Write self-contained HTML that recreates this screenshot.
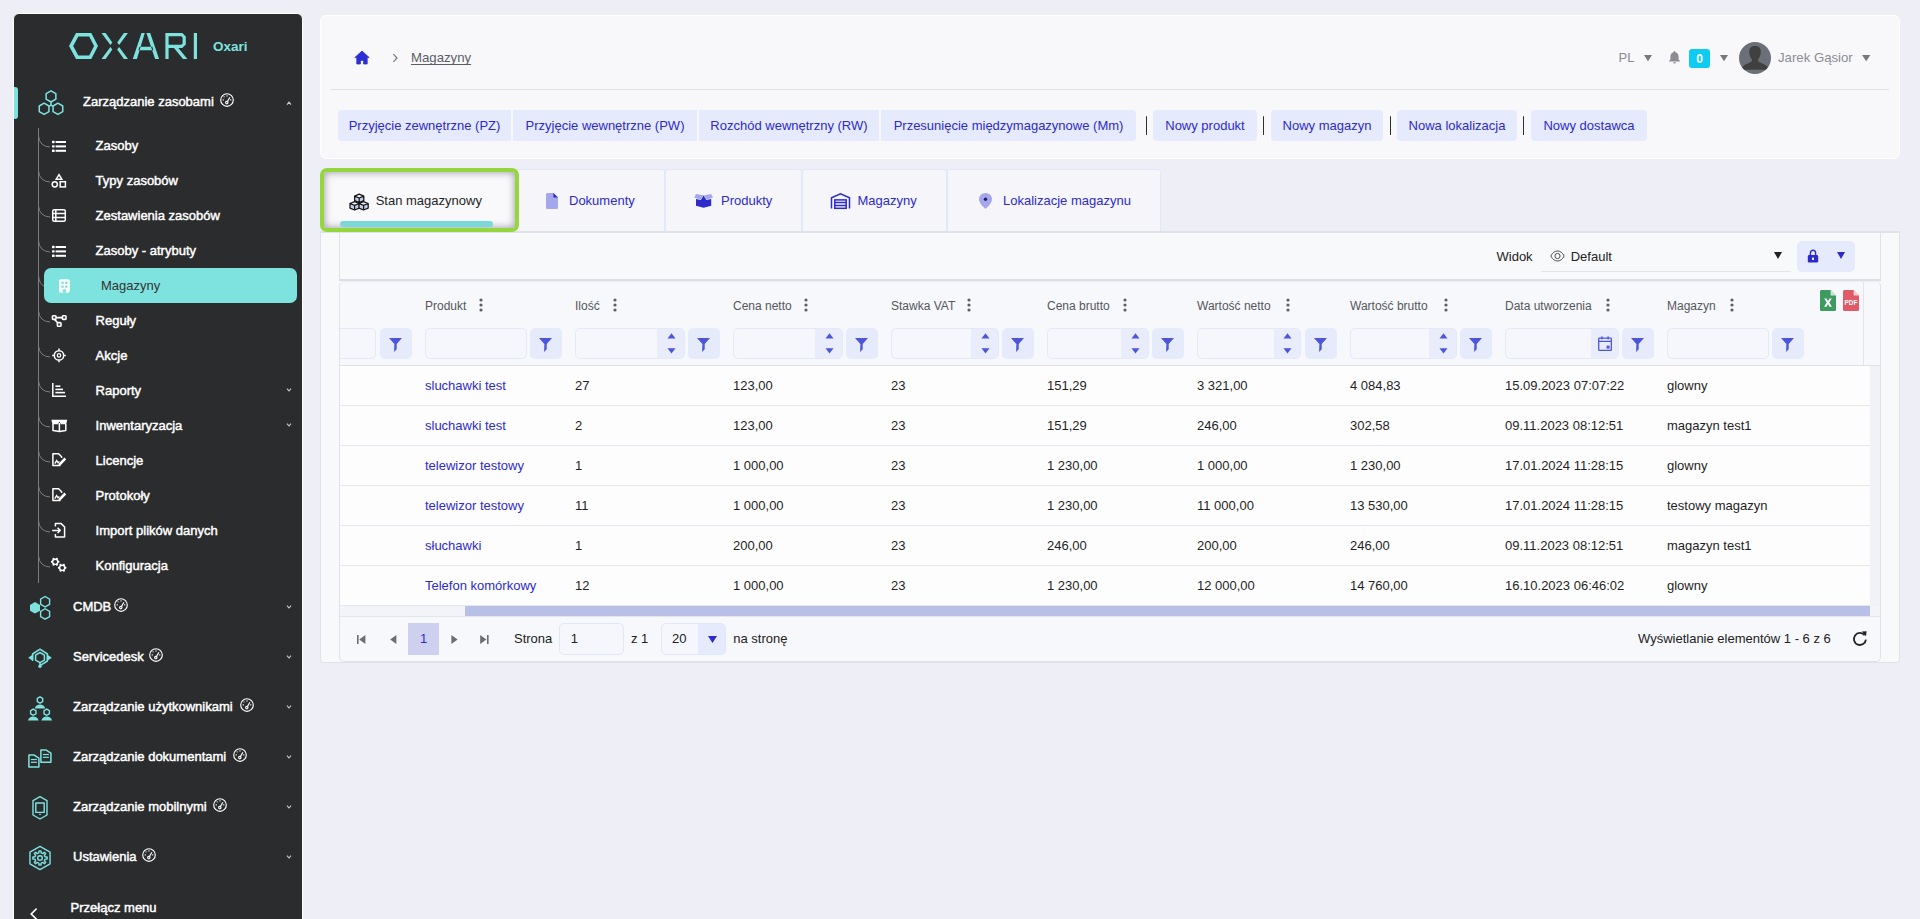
<!DOCTYPE html>
<html><head><meta charset="utf-8">
<style>
*{box-sizing:border-box;margin:0;padding:0}
html,body{width:1920px;height:919px;overflow:hidden}
body{background:#eeeef6;font-family:"Liberation Sans",sans-serif;position:relative;color:#222}
.a{position:absolute}
.t{position:absolute;white-space:nowrap}
svg{display:block;overflow:visible}
</style></head><body>

<div class="a" style="left:13px;top:13px;width:290px;height:940px;background:#2b2c2e;border:1px solid #fff;border-radius:6px"></div>
<svg class="a" style="left:0;top:0" width="260" height="70" viewBox="0 0 260 70"><g fill="#7ee3df" fill-rule="evenodd">
<path d="M76,33 L91.3,33 L98,46 L91.3,59 L76,59 L69,46 Z M78.3,36.4 L89.2,36.4 L94.1,46 L89.2,55.6 L78.3,55.6 L73.2,46 Z"/>
<path d="M101.5,33 L105.6,33 L112.3,42.4 L110.4,45 Z M101.5,59 L105.6,59 L112.3,49.6 L110.4,47 Z"/>
<path d="M128,33 L123.9,33 L117.2,42.4 L119.1,45 Z M128,59 L123.9,59 L117.2,49.6 L119.1,47 Z"/>
<path d="M132.8,59 L136.9,59 L144.8,33 L141.5,33 Z M159.1,59 L155.1,59 L146.4,33 L150.2,33 Z M139.5,46.7 L152.3,46.7 L153.4,50.2 L138.4,50.2 Z"/>
<path d="M165.4,33 L182.3,33 L185.8,36.6 L185.8,44.4 L182.2,48 L178.4,48 L187.4,59 L183,59 L174,48 L168.6,48 L168.6,59 L165.4,59 Z M168.6,36.2 L181.2,36.2 L182.6,37.6 L182.6,43.4 L181.2,44.8 L168.6,44.8 Z"/>
<rect x="193.8" y="33" width="3.2" height="26"/>
</g></svg>
<span class="t " style="left:213px;top:36.62px;font-size:13.5px;line-height:20px;height:20px;color:#7ee3df;font-weight:bold;">Oxari</span>
<div class="a" style="left:14px;top:87px;width:4px;height:32px;background:#7ee3df;border-radius:0 3px 3px 0"></div>
<svg class="a" style="left:0;top:0" width="80" height="130"><g fill="none" stroke="#7ee3df" stroke-width="1.5" stroke-linejoin="round"><path d="M51.00,102.00 L46.15,99.20 L46.15,93.60 L51.00,90.80 L55.85,93.60 L55.85,99.20 Z"/><path d="M44.10,114.40 L39.25,111.60 L39.25,106.00 L44.10,103.20 L48.95,106.00 L48.95,111.60 Z"/><path d="M57.90,114.40 L53.05,111.60 L53.05,106.00 L57.90,103.20 L62.75,106.00 L62.75,111.60 Z"/><path d="M51,102 L51,105.2 M51,105.2 L49,106.3 M51,105.2 L53,106.3"/></g></svg>
<span class="t " style="left:83px;top:91.69px;font-size:13px;line-height:20px;height:20px;color:#fff;-webkit-text-stroke:0.45px #fff;">Zarządzanie zasobami</span>
<svg class="a" style="left:220px;top:93px" width="14" height="14" viewBox="0 0 14 14"><g fill="none" stroke="#fff" stroke-width="1.15"><circle cx="7" cy="7" r="6.3"/><circle cx="6.8" cy="9.6" r="1.2"/><path d="M7.4,8.6 L9.9,4.2"/></g><g fill="#fff"><rect x="6.5" y="2.2" width="1" height="1.4"/><circle cx="4.1" cy="3.8" r=".6"/><rect x="2.6" y="6.4" width="1.4" height="1"/><rect x="10" y="6.4" width="1.4" height="1"/></g></svg>
<svg class="a" style="left:286px;top:100px" width="6" height="6" viewBox="0 0 6 6"><path d="M1,4.6 L3,2.2 L5,4.6" fill="none" stroke="#ccc" stroke-width="1.1"/></svg>
<div class="a" style="left:38px;top:128px;width:1px;height:455px;background:#7d7d7d"></div>
<span class="t " style="left:95.6px;top:135.99px;font-size:13px;line-height:20px;height:20px;color:#fff;-webkit-text-stroke:0.45px #fff;">Zasoby</span>
<svg class="a" style="left:0;top:0" width="80" height="600"><rect x="52" y="140.8" width="2.6" height="2.4" rx=".6" fill="#fff"/><rect x="55.6" y="141.0" width="10.4" height="2" fill="#fff"/><rect x="52" y="145.20000000000002" width="2.6" height="2.4" rx=".6" fill="#fff"/><rect x="55.6" y="145.4" width="10.4" height="2" fill="#fff"/><rect x="52" y="149.60000000000002" width="2.6" height="2.4" rx=".6" fill="#fff"/><rect x="55.6" y="149.8" width="10.4" height="2" fill="#fff"/></svg>
<svg class="a" style="left:0;top:0" width="60" height="600"><path d="M38.5,136 Q39.5,146.5 50,147" fill="none" stroke="#7d7d7d" stroke-width="1"/></svg>
<span class="t " style="left:95.6px;top:170.99px;font-size:13px;line-height:20px;height:20px;color:#fff;-webkit-text-stroke:0.45px #fff;">Typy zasobów</span>
<svg class="a" style="left:0;top:0" width="80" height="600"><g fill="none" stroke="#fff" stroke-width="1.5"><path d="M59,174.6 L61.8,179.2 L56.2,179.2 Z"/><circle cx="54.8" cy="184.3" r="2.6"/><rect x="60.2" y="181.7" width="5.2" height="5.2"/></g></svg>
<svg class="a" style="left:0;top:0" width="60" height="600"><path d="M38.5,171 Q39.5,181.5 50,182" fill="none" stroke="#7d7d7d" stroke-width="1"/></svg>
<span class="t " style="left:95.6px;top:205.99px;font-size:13px;line-height:20px;height:20px;color:#fff;-webkit-text-stroke:0.45px #fff;">Zestawienia zasobów</span>
<svg class="a" style="left:0;top:0" width="80" height="600"><g fill="none" stroke="#fff" stroke-width="1.5"><rect x="52.7" y="209.7" width="12.6" height="11.6" rx="1.5"/><path d="M52.7,213.6 H65.3 M52.7,217.4 H65.3 M55.8,209.7 V221.3"/></g></svg>
<svg class="a" style="left:0;top:0" width="60" height="600"><path d="M38.5,206 Q39.5,216.5 50,217" fill="none" stroke="#7d7d7d" stroke-width="1"/></svg>
<span class="t " style="left:95.6px;top:240.99px;font-size:13px;line-height:20px;height:20px;color:#fff;-webkit-text-stroke:0.45px #fff;">Zasoby - atrybuty</span>
<svg class="a" style="left:0;top:0" width="80" height="600"><rect x="52" y="245.8" width="2.6" height="2.4" rx=".6" fill="#fff"/><rect x="55.6" y="246.0" width="10.4" height="2" fill="#fff"/><rect x="52" y="250.20000000000002" width="2.6" height="2.4" rx=".6" fill="#fff"/><rect x="55.6" y="250.4" width="10.4" height="2" fill="#fff"/><rect x="52" y="254.60000000000002" width="2.6" height="2.4" rx=".6" fill="#fff"/><rect x="55.6" y="254.8" width="10.4" height="2" fill="#fff"/></svg>
<svg class="a" style="left:0;top:0" width="60" height="600"><path d="M38.5,241 Q39.5,251.5 50,252" fill="none" stroke="#7d7d7d" stroke-width="1"/></svg>
<div class="a" style="left:44px;top:268px;width:253px;height:35px;background:#7ee3df;border-radius:7px"></div>
<svg class="a" style="left:0;top:0" width="80" height="300"><rect x="59" y="279.2" width="10.8" height="13.6" rx="2" fill="#fff"/><g fill="#7ee3df"><rect x="61.3" y="281.6" width="2.4" height="2.4"/><rect x="65.1" y="281.6" width="2.4" height="2.4"/><rect x="61.3" y="285.4" width="2.4" height="2.4"/><rect x="65.1" y="285.4" width="2.4" height="2.4"/><rect x="62.6" y="289.2" width="3.6" height="3.6" rx="1"/></g></svg>
<span class="t " style="left:101px;top:276.49px;font-size:13px;line-height:20px;height:20px;color:#333;">Magazyny</span>
<svg class="a" style="left:0;top:0" width="60" height="600"><path d="M38.5,276 Q39.5,284 44,286" fill="none" stroke="#7d7d7d" stroke-width="1"/></svg>
<span class="t " style="left:95.6px;top:310.99px;font-size:13px;line-height:20px;height:20px;color:#fff;-webkit-text-stroke:0.45px #fff;">Reguły</span>
<svg class="a" style="left:0;top:0" width="80" height="600"><g fill="none" stroke="#fff" stroke-width="1.6"><rect x="52.4" y="315.8" width="3.6" height="3.6" rx=".8"/><rect x="62.4" y="315.8" width="3.6" height="3.6" rx=".8"/><rect x="57.4" y="322.6" width="3.6" height="3.6" rx=".8"/><path d="M56,317.6 H62.4 M54.6,319.4 L57.6,322.8"/></g></svg>
<svg class="a" style="left:0;top:0" width="60" height="600"><path d="M38.5,311 Q39.5,321.5 50,322" fill="none" stroke="#7d7d7d" stroke-width="1"/></svg>
<span class="t " style="left:95.6px;top:345.99px;font-size:13px;line-height:20px;height:20px;color:#fff;-webkit-text-stroke:0.45px #fff;">Akcje</span>
<svg class="a" style="left:0;top:0" width="80" height="600"><g fill="none" stroke="#fff" stroke-width="1.5"><circle cx="59" cy="355.4" r="4.7"/><circle cx="59" cy="355.4" r="1.7" stroke-width="1.3"/><path d="M59,348.6 V350.6 M59,360.2 V362.2 M52.2,355.4 H54.2 M63.8,355.4 H65.8"/></g></svg>
<svg class="a" style="left:0;top:0" width="60" height="600"><path d="M38.5,346 Q39.5,356.5 50,357" fill="none" stroke="#7d7d7d" stroke-width="1"/></svg>
<span class="t " style="left:95.6px;top:380.99px;font-size:13px;line-height:20px;height:20px;color:#fff;-webkit-text-stroke:0.45px #fff;">Raporty</span>
<svg class="a" style="left:0;top:0" width="80" height="600"><g fill="none" stroke="#fff" stroke-width="1.5"><path d="M52.8,383 V396.2 H66"/></g><g fill="#fff"><rect x="55.4" y="385.4" width="5" height="1.6"/><rect x="55.4" y="388.6" width="7.6" height="1.6"/><rect x="55.4" y="391.8" width="9.6" height="1.6"/></g></svg>
<svg class="a" style="left:0;top:0" width="60" height="600"><path d="M38.5,381 Q39.5,391.5 50,392" fill="none" stroke="#7d7d7d" stroke-width="1"/></svg>
<span class="t " style="left:95.6px;top:415.99px;font-size:13px;line-height:20px;height:20px;color:#fff;-webkit-text-stroke:0.45px #fff;">Inwentaryzacja</span>
<svg class="a" style="left:0;top:0" width="80" height="600"><path d="M51.4,419.8 L67.2,419.8 L66.2,424.2 L52.4,424.2 Z" fill="#fff"/><path d="M57.8,424.4 L59.4,421.6 L61,424.4 Z" fill="#2b2c2e"/><g fill="none" stroke="#fff" stroke-width="1.5" stroke-linejoin="round"><path d="M53,424 V430.4 L59.4,431.6 L65.8,430.4 V424 M59.4,423 V431.4"/></g></svg>
<svg class="a" style="left:0;top:0" width="60" height="600"><path d="M38.5,416 Q39.5,426.5 50,427" fill="none" stroke="#7d7d7d" stroke-width="1"/></svg>
<span class="t " style="left:95.6px;top:450.99px;font-size:13px;line-height:20px;height:20px;color:#fff;-webkit-text-stroke:0.45px #fff;">Licencje</span>
<svg class="a" style="left:0;top:0" width="80" height="600"><g fill="none" stroke="#fff" stroke-width="1.5" stroke-linejoin="round"><path d="M60.5,465.6 H52.9 V453.8 H58.6 L61.6,456.8 V458"/></g><g fill="none" stroke="#fff" stroke-width="1.3"><path d="M54.8,463.6 L56.6,460.6 L58,462.8 L59.4,461.6"/></g><path d="M58.8,463.4 L64.4,457.6 L66.2,459.4 L60.6,465.2 L58.4,465.6 Z" fill="#fff"/></svg>
<svg class="a" style="left:0;top:0" width="60" height="600"><path d="M38.5,451 Q39.5,461.5 50,462" fill="none" stroke="#7d7d7d" stroke-width="1"/></svg>
<span class="t " style="left:95.6px;top:485.99px;font-size:13px;line-height:20px;height:20px;color:#fff;-webkit-text-stroke:0.45px #fff;">Protokoły</span>
<svg class="a" style="left:0;top:0" width="80" height="600"><g fill="none" stroke="#fff" stroke-width="1.5" stroke-linejoin="round"><path d="M60.5,500.6 H52.9 V488.8 H58.6 L61.6,491.8 V493"/></g><g fill="none" stroke="#fff" stroke-width="1.3"><path d="M54.8,498.6 L56.6,495.6 L58,497.8 L59.4,496.6"/></g><path d="M58.8,498.4 L64.4,492.6 L66.2,494.4 L60.6,500.2 L58.4,500.6 Z" fill="#fff"/></svg>
<svg class="a" style="left:0;top:0" width="60" height="600"><path d="M38.5,486 Q39.5,496.5 50,497" fill="none" stroke="#7d7d7d" stroke-width="1"/></svg>
<span class="t " style="left:95.6px;top:520.99px;font-size:13px;line-height:20px;height:20px;color:#fff;-webkit-text-stroke:0.45px #fff;">Import plików danych</span>
<svg class="a" style="left:0;top:0" width="80" height="600"><g fill="none" stroke="#fff" stroke-width="1.5" stroke-linejoin="round"><path d="M55.4,526.6 V523.6 H61.2 L64.6,527 V537 H55.4 V534"/><path d="M52.2,530.4 H60.2 M57.6,527.8 L60.2,530.4 L57.6,533"/></g></svg>
<svg class="a" style="left:0;top:0" width="60" height="600"><path d="M38.5,521 Q39.5,531.5 50,532" fill="none" stroke="#7d7d7d" stroke-width="1"/></svg>
<span class="t " style="left:95.6px;top:555.99px;font-size:13px;line-height:20px;height:20px;color:#fff;-webkit-text-stroke:0.45px #fff;">Konfiguracja</span>
<svg class="a" style="left:0;top:0" width="80" height="600"><g fill="none" stroke="#fff" stroke-width="1.4"><circle cx="55.2" cy="561.8" r="2.6"/><circle cx="62.2" cy="567.8" r="2.6"/></g><g fill="#fff"><circle cx="58.50" cy="561.80" r="1.1"/><circle cx="56.85" cy="564.66" r="1.1"/><circle cx="53.55" cy="564.66" r="1.1"/><circle cx="51.90" cy="561.80" r="1.1"/><circle cx="53.55" cy="558.94" r="1.1"/><circle cx="56.85" cy="558.94" r="1.1"/><circle cx="65.50" cy="567.80" r="1.1"/><circle cx="63.85" cy="570.66" r="1.1"/><circle cx="60.55" cy="570.66" r="1.1"/><circle cx="58.90" cy="567.80" r="1.1"/><circle cx="60.55" cy="564.94" r="1.1"/><circle cx="63.85" cy="564.94" r="1.1"/></g></svg>
<svg class="a" style="left:0;top:0" width="60" height="600"><path d="M38.5,556 Q39.5,566.5 50,567" fill="none" stroke="#7d7d7d" stroke-width="1"/></svg>
<svg class="a" style="left:286px;top:387px" width="6" height="6" viewBox="0 0 6 6"><path d="M1,1.6 L3,4 L5,1.6" fill="none" stroke="#ccc" stroke-width="1.1"/></svg>
<svg class="a" style="left:286px;top:422px" width="6" height="6" viewBox="0 0 6 6"><path d="M1,1.6 L3,4 L5,1.6" fill="none" stroke="#ccc" stroke-width="1.1"/></svg>
<span class="t " style="left:73px;top:596.89px;font-size:13px;line-height:20px;height:20px;color:#fff;-webkit-text-stroke:0.45px #fff;">CMDB</span>
<svg class="a" style="left:114px;top:598px" width="14" height="14" viewBox="0 0 14 14"><g fill="none" stroke="#fff" stroke-width="1.15"><circle cx="7" cy="7" r="6.3"/><circle cx="6.8" cy="9.6" r="1.2"/><path d="M7.4,8.6 L9.9,4.2"/></g><g fill="#fff"><rect x="6.5" y="2.2" width="1" height="1.4"/><circle cx="4.1" cy="3.8" r=".6"/><rect x="2.6" y="6.4" width="1.4" height="1"/><rect x="10" y="6.4" width="1.4" height="1"/></g></svg>
<svg class="a" style="left:286px;top:604px" width="6" height="6" viewBox="0 0 6 6"><path d="M1,1.6 L3,4 L5,1.6" fill="none" stroke="#ccc" stroke-width="1.1"/></svg>
<svg class="a" style="left:0;top:0" width="60" height="900"><path d="M35.00,613.60 L29.98,610.70 L29.98,604.90 L35.00,602.00 L40.02,604.90 L40.02,610.70 Z" fill="#7ee3df"/><g fill="none" stroke="#7ee3df" stroke-width="1.4"><path d="M45.10,606.90 L40.60,604.30 L40.60,599.10 L45.10,596.50 L49.60,599.10 L49.60,604.30 Z"/><path d="M45.10,619.10 L40.60,616.50 L40.60,611.30 L45.10,608.70 L49.60,611.30 L49.60,616.50 Z"/></g></svg>
<span class="t " style="left:73px;top:646.89px;font-size:13px;line-height:20px;height:20px;color:#fff;-webkit-text-stroke:0.45px #fff;">Servicedesk</span>
<svg class="a" style="left:149.2px;top:648px" width="14" height="14" viewBox="0 0 14 14"><g fill="none" stroke="#fff" stroke-width="1.15"><circle cx="7" cy="7" r="6.3"/><circle cx="6.8" cy="9.6" r="1.2"/><path d="M7.4,8.6 L9.9,4.2"/></g><g fill="#fff"><rect x="6.5" y="2.2" width="1" height="1.4"/><circle cx="4.1" cy="3.8" r=".6"/><rect x="2.6" y="6.4" width="1.4" height="1"/><rect x="10" y="6.4" width="1.4" height="1"/></g></svg>
<svg class="a" style="left:286px;top:654px" width="6" height="6" viewBox="0 0 6 6"><path d="M1,1.6 L3,4 L5,1.6" fill="none" stroke="#ccc" stroke-width="1.1"/></svg>
<svg class="a" style="left:0;top:0" width="60" height="900"><g fill="none" stroke="#7ee3df" stroke-width="1.5" stroke-linejoin="round"><path d="M40.00,662.70 L35.58,660.15 L35.58,655.05 L40.00,652.50 L44.42,655.05 L44.42,660.15 Z"/><path d="M32.6,660.6 V654 L40,649.2 L47.4,654 V661 L40.8,665.2 M40,662.6 V665.4"/></g><g fill="#7ee3df"><path d="M33.2,654.2 L28.2,657.7 L33.2,661.2 Z"/><path d="M46.8,654.2 L51.8,657.7 L46.8,661.2 Z"/><circle cx="40" cy="666.2" r="1.7"/></g></svg>
<span class="t " style="left:73px;top:696.89px;font-size:13px;line-height:20px;height:20px;color:#fff;-webkit-text-stroke:0.45px #fff;">Zarządzanie użytkownikami</span>
<svg class="a" style="left:239.7px;top:698px" width="14" height="14" viewBox="0 0 14 14"><g fill="none" stroke="#fff" stroke-width="1.15"><circle cx="7" cy="7" r="6.3"/><circle cx="6.8" cy="9.6" r="1.2"/><path d="M7.4,8.6 L9.9,4.2"/></g><g fill="#fff"><rect x="6.5" y="2.2" width="1" height="1.4"/><circle cx="4.1" cy="3.8" r=".6"/><rect x="2.6" y="6.4" width="1.4" height="1"/><rect x="10" y="6.4" width="1.4" height="1"/></g></svg>
<svg class="a" style="left:286px;top:704px" width="6" height="6" viewBox="0 0 6 6"><path d="M1,1.6 L3,4 L5,1.6" fill="none" stroke="#ccc" stroke-width="1.1"/></svg>
<svg class="a" style="left:0;top:0" width="60" height="900"><g fill="none" stroke="#7ee3df" stroke-width="1.4"><path d="M40.00,703.10 L37.32,701.55 L37.32,698.45 L40.00,696.90 L42.68,698.45 L42.68,701.55 Z"/><path d="M33.30,715.30 L30.62,713.75 L30.62,710.65 L33.30,709.10 L35.98,710.65 L35.98,713.75 Z"/><path d="M46.70,715.30 L44.02,713.75 L44.02,710.65 L46.70,709.10 L49.38,710.65 L49.38,713.75 Z"/></g><g fill="#7ee3df"><path d="M34.8,708.4 C35.6,705.4 37.6,704.4 40,704.4 C42.4,704.4 44.4,705.4 45.2,708.4 Z"/><path d="M28,720.4 C28.8,717.4 30.9,716.4 33.3,716.4 C35.7,716.4 37.8,717.4 38.6,720.4 Z"/><path d="M41.4,720.4 C42.2,717.4 44.3,716.4 46.7,716.4 C49.1,716.4 51.2,717.4 52,720.4 Z"/></g></svg>
<span class="t " style="left:73px;top:746.89px;font-size:13px;line-height:20px;height:20px;color:#fff;-webkit-text-stroke:0.45px #fff;">Zarządzanie dokumentami</span>
<svg class="a" style="left:233.3px;top:748px" width="14" height="14" viewBox="0 0 14 14"><g fill="none" stroke="#fff" stroke-width="1.15"><circle cx="7" cy="7" r="6.3"/><circle cx="6.8" cy="9.6" r="1.2"/><path d="M7.4,8.6 L9.9,4.2"/></g><g fill="#fff"><rect x="6.5" y="2.2" width="1" height="1.4"/><circle cx="4.1" cy="3.8" r=".6"/><rect x="2.6" y="6.4" width="1.4" height="1"/><rect x="10" y="6.4" width="1.4" height="1"/></g></svg>
<svg class="a" style="left:286px;top:754px" width="6" height="6" viewBox="0 0 6 6"><path d="M1,1.6 L3,4 L5,1.6" fill="none" stroke="#ccc" stroke-width="1.1"/></svg>
<svg class="a" style="left:0;top:0" width="60" height="900"><g fill="none" stroke="#7ee3df" stroke-width="1.5" stroke-linejoin="round"><path d="M28.9,754.9 H33.8 L38.9,758.1 V767 H28.9 Z"/><path d="M40.9,749.9 H45.8 L50.9,753.1 V762.2 H40.9 Z"/></g><g fill="#7ee3df"><rect x="30.9" y="758.9" width="6" height="1.2"/><rect x="30.9" y="761.7" width="6" height="1.2"/><rect x="42.9" y="753.9" width="6" height="1.2"/><rect x="42.9" y="756.7" width="6" height="1.2"/></g></svg>
<span class="t " style="left:73px;top:796.89px;font-size:13px;line-height:20px;height:20px;color:#fff;-webkit-text-stroke:0.45px #fff;">Zarządzanie mobilnymi</span>
<svg class="a" style="left:213.4px;top:798px" width="14" height="14" viewBox="0 0 14 14"><g fill="none" stroke="#fff" stroke-width="1.15"><circle cx="7" cy="7" r="6.3"/><circle cx="6.8" cy="9.6" r="1.2"/><path d="M7.4,8.6 L9.9,4.2"/></g><g fill="#fff"><rect x="6.5" y="2.2" width="1" height="1.4"/><circle cx="4.1" cy="3.8" r=".6"/><rect x="2.6" y="6.4" width="1.4" height="1"/><rect x="10" y="6.4" width="1.4" height="1"/></g></svg>
<svg class="a" style="left:286px;top:804px" width="6" height="6" viewBox="0 0 6 6"><path d="M1,1.6 L3,4 L5,1.6" fill="none" stroke="#ccc" stroke-width="1.1"/></svg>
<svg class="a" style="left:0;top:0" width="60" height="900"><g fill="none" stroke="#7ee3df" stroke-width="1.4" stroke-linejoin="round"><path d="M40,796.6 L47,800.6 V815 L40,819 L33,815 V800.6 Z"/><rect x="35.8" y="803" width="8.4" height="9.4"/></g><rect x="39" y="813.8" width="2" height="1" fill="#7ee3df"/></svg>
<span class="t " style="left:73px;top:846.89px;font-size:13px;line-height:20px;height:20px;color:#fff;-webkit-text-stroke:0.45px #fff;">Ustawienia</span>
<svg class="a" style="left:142px;top:848px" width="14" height="14" viewBox="0 0 14 14"><g fill="none" stroke="#fff" stroke-width="1.15"><circle cx="7" cy="7" r="6.3"/><circle cx="6.8" cy="9.6" r="1.2"/><path d="M7.4,8.6 L9.9,4.2"/></g><g fill="#fff"><rect x="6.5" y="2.2" width="1" height="1.4"/><circle cx="4.1" cy="3.8" r=".6"/><rect x="2.6" y="6.4" width="1.4" height="1"/><rect x="10" y="6.4" width="1.4" height="1"/></g></svg>
<svg class="a" style="left:286px;top:854px" width="6" height="6" viewBox="0 0 6 6"><path d="M1,1.6 L3,4 L5,1.6" fill="none" stroke="#ccc" stroke-width="1.1"/></svg>
<svg class="a" style="left:0;top:0" width="60" height="900"><g fill="none" stroke="#7ee3df" stroke-width="1.4" stroke-linejoin="round"><path d="M40.00,869.60 L29.95,863.80 L29.95,852.20 L40.00,846.40 L50.05,852.20 L50.05,863.80 Z"/><path d="M45.08,856.89 L47.13,857.01 L47.13,858.99 L45.08,859.11 L44.38,860.80 L45.74,862.35 L44.35,863.74 L42.80,862.38 L41.11,863.08 L40.99,865.13 L39.01,865.13 L38.89,863.08 L37.20,862.38 L35.65,863.74 L34.26,862.35 L35.62,860.80 L34.92,859.11 L32.87,858.99 L32.87,857.01 L34.92,856.89 L35.62,855.20 L34.26,853.65 L35.65,852.26 L37.20,853.62 L38.89,852.92 L39.01,850.87 L40.99,850.87 L41.11,852.92 L42.80,853.62 L44.35,852.26 L45.74,853.65 L44.38,855.20 Z"/><circle cx="40" cy="858" r="2.3"/></g></svg>
<span class="t " style="left:70.6px;top:897.89px;font-size:13px;line-height:20px;height:20px;color:#fff;-webkit-text-stroke:0.45px #fff;">Przełącz menu</span>
<svg class="a" style="left:0;top:0" width="60" height="919"><path d="M36.6,908.6 L31.2,914 L36.6,919.4" fill="none" stroke="#fff" stroke-width="1.6"/></svg>
<div class="a" style="left:320px;top:15px;width:1580px;height:144px;background:#f8f8fb;border:1px solid #fff;border-radius:6px"></div>
<svg class="a" style="left:354px;top:50px" width="16" height="15" viewBox="0 0 16 15"><path d="M8,1 L15.2,7.6 L13.2,7.6 L13.2,14 L9.6,14 L9.6,10.4 L6.4,10.4 L6.4,14 L2.8,14 L2.8,7.6 L0.8,7.6 Z" fill="#2d2fd6" stroke="#2d2fd6" stroke-width=".8" stroke-linejoin="round"/></svg>
<svg class="a" style="left:390px;top:52px" width="10" height="12" viewBox="0 0 10 12"><path d="M3.4,2.2 L7,6 L3.4,9.8" fill="none" stroke="#777" stroke-width="1.2"/></svg>
<span class="t " style="left:411px;top:48.42px;font-size:13.2px;line-height:20px;height:20px;color:#5b5e66;text-decoration:underline;text-underline-offset:2px;">Magazyny</span>
<div class="a" style="left:331px;top:89px;width:1558px;height:1px;background:#dfe2e8"></div>
<span class="t " style="left:1618.6px;top:48.49px;font-size:13px;line-height:20px;height:20px;color:#8a8c92;">PL</span>
<svg class="a" style="left:1644px;top:55px" width="8" height="6.2" viewBox="0 0 8 6.2"><path d="M0,0 L8,0 L4.0,6.2 Z" fill="#77797e"/></svg>
<svg class="a" style="left:1668px;top:50px" width="13" height="14" viewBox="0 0 13 14"><path d="M6.5,1 C6,1 5.6,1.4 5.6,1.9 L5.6,2.3 C3.6,2.8 2.4,4.5 2.4,6.6 L2.4,9.4 L1,11 L1,11.6 L12,11.6 L12,11 L10.6,9.4 L10.6,6.6 C10.6,4.5 9.4,2.8 7.4,2.3 L7.4,1.9 C7.4,1.4 7,1 6.5,1 Z M5.1,12.3 C5.1,13.1 5.7,13.6 6.5,13.6 C7.3,13.6 7.9,13.1 7.9,12.3 Z" fill="#8b8d92"/></svg>
<div class="a" style="left:1689px;top:49px;width:21px;height:19px;background:#0ecbf1;border-radius:3px;color:#fff;font-weight:bold;font-size:12px;line-height:20px;text-align:center">0</div>
<svg class="a" style="left:1720px;top:55px" width="8" height="6.2" viewBox="0 0 8 6.2"><path d="M0,0 L8,0 L4.0,6.2 Z" fill="#77797e"/></svg>
<svg class="a" style="left:1739px;top:42px" width="32" height="32" viewBox="0 0 32 32"><defs><clipPath id="av"><circle cx="16" cy="16" r="16"/></clipPath></defs><circle cx="16" cy="16" r="16" fill="#6b7078"/><g clip-path="url(#av)" fill="#404040"><path d="M10.2,9.6 C10.2,5.4 12.6,3.9 16,3.9 C19.4,3.9 21.8,5.4 21.8,9.6 C21.8,13 20.6,15.6 19.2,17.2 L19.2,19.6 L26.4,23 C28,23.8 29,25.4 29.4,27.7 L2.6,27.7 C3,25.4 4,23.8 5.6,23 L12.8,19.6 L12.8,17.2 C11.4,15.6 10.2,13 10.2,9.6 Z"/></g></svg>
<span class="t " style="left:1778px;top:47.92px;font-size:13.2px;line-height:20px;height:20px;color:#8a8c92;">Jarek Gąsior</span>
<svg class="a" style="left:1862px;top:55px" width="8.4" height="6.2" viewBox="0 0 8.4 6.2"><path d="M0,0 L8.4,0 L4.2,6.2 Z" fill="#77797e"/></svg>
<div class="a" style="left:338px;top:110px;width:173px;height:31px;background:#e6eafd;border-radius:4px 0 0 4px"></div>
<span class="t" style="left:338px;width:173px;text-align:center;top:115.5px;font-size:13px;line-height:20px;color:#2d2bcc">Przyjęcie zewnętrzne (PZ)</span>
<div class="a" style="left:513px;top:110px;width:184px;height:31px;background:#e6eafd;border-radius:0"></div>
<span class="t" style="left:513px;width:184px;text-align:center;top:115.5px;font-size:13px;line-height:20px;color:#2d2bcc">Przyjęcie wewnętrzne (PW)</span>
<div class="a" style="left:699px;top:110px;width:180px;height:31px;background:#e6eafd;border-radius:0"></div>
<span class="t" style="left:699px;width:180px;text-align:center;top:115.5px;font-size:13px;line-height:20px;color:#2d2bcc">Rozchód wewnętrzny (RW)</span>
<div class="a" style="left:881px;top:110px;width:255px;height:31px;background:#e6eafd;border-radius:0 4px 4px 0"></div>
<span class="t" style="left:881px;width:255px;text-align:center;top:115.5px;font-size:13px;line-height:20px;color:#2d2bcc">Przesunięcie międzymagazynowe (Mm)</span>
<div class="a" style="left:1153px;top:110px;width:104px;height:31px;background:#e6eafd;border-radius:4px"></div>
<span class="t" style="left:1153px;width:104px;text-align:center;top:115.5px;font-size:13px;line-height:20px;color:#2d2bcc">Nowy produkt</span>
<div class="a" style="left:1271px;top:110px;width:112px;height:31px;background:#e6eafd;border-radius:4px"></div>
<span class="t" style="left:1271px;width:112px;text-align:center;top:115.5px;font-size:13px;line-height:20px;color:#2d2bcc">Nowy magazyn</span>
<div class="a" style="left:1397px;top:110px;width:120px;height:31px;background:#e6eafd;border-radius:4px"></div>
<span class="t" style="left:1397px;width:120px;text-align:center;top:115.5px;font-size:13px;line-height:20px;color:#2d2bcc">Nowa lokalizacja</span>
<div class="a" style="left:1531px;top:110px;width:116px;height:31px;background:#e6eafd;border-radius:4px"></div>
<span class="t" style="left:1531px;width:116px;text-align:center;top:115.5px;font-size:13px;line-height:20px;color:#2d2bcc">Nowy dostawca</span>
<div class="a" style="left:1145.7px;top:116px;width:1.6px;height:19px;background:#2b2e33;border-radius:1px"></div>
<div class="a" style="left:1262.8px;top:116px;width:1.6px;height:19px;background:#2b2e33;border-radius:1px"></div>
<div class="a" style="left:1389.5px;top:116px;width:1.6px;height:19px;background:#2b2e33;border-radius:1px"></div>
<div class="a" style="left:1522.8px;top:116px;width:1.6px;height:19px;background:#2b2e33;border-radius:1px"></div>
<div class="a" style="left:505px;top:169px;width:160px;height:64px;background:#f5f5fa;border:1px solid #e2e8fb;border-bottom:none;border-radius:3px 3px 0 0"></div>
<div class="a" style="left:665px;top:169px;width:137px;height:64px;background:#f5f5fa;border:1px solid #e2e8fb;border-bottom:none;border-radius:3px 3px 0 0"></div>
<div class="a" style="left:802px;top:169px;width:145px;height:64px;background:#f5f5fa;border:1px solid #e2e8fb;border-bottom:none;border-radius:3px 3px 0 0"></div>
<div class="a" style="left:947px;top:169px;width:214px;height:64px;background:#f5f5fa;border:1px solid #e2e8fb;border-bottom:none;border-radius:3px 3px 0 0"></div>
<div class="a" style="left:320px;top:231px;width:1580px;height:432px;background:#f8f9fb;border:1px solid #dfe2e8;border-top:2px solid #dfe2e8;border-radius:0 0 4px 4px"></div>
<div class="a" style="left:320px;top:168px;width:199px;height:64px;border:4.6px solid #93d63e;border-radius:7px;background:#f9f9fc;box-shadow:inset 0 0 7px 1px rgba(50,50,70,.42)"></div>
<div class="a" style="left:340px;top:221px;width:153px;height:6px;background:#7ad9d6;border-radius:3px"></div>
<svg class="a" style="left:349px;top:193px" width="20" height="18" viewBox="0 0 20 18"><path d="M5.6,3.0999999999999996 V7.699999999999999 L10.2,9.6 L14.799999999999999,7.699999999999999 V3.0999999999999996 L10.2,5.0 Z" fill="#c6d0e4"/><path d="M10.2,1.2 L14.799999999999999,3.0999999999999996 L10.2,5.0 L5.6,3.0999999999999996 Z" fill="#f4f5fb"/><path d="M5.6,3.0999999999999996 V7.699999999999999 L10.2,9.6 L14.799999999999999,7.699999999999999 V3.0999999999999996 L10.2,5.0 Z M10.2,1.2 L14.799999999999999,3.0999999999999996 L10.2,5.0 L5.6,3.0999999999999996 Z M10.2,5.0 V9.6" fill="none" stroke="#141418" stroke-width="1.25" stroke-linejoin="round"/><path d="M1.0,10.5 V15.1 L5.6,17.0 L10.2,15.1 V10.5 L5.6,12.399999999999999 Z" fill="#c6d0e4"/><path d="M5.6,8.6 L10.2,10.5 L5.6,12.399999999999999 L1.0,10.5 Z" fill="#f4f5fb"/><path d="M1.0,10.5 V15.1 L5.6,17.0 L10.2,15.1 V10.5 L5.6,12.399999999999999 Z M5.6,8.6 L10.2,10.5 L5.6,12.399999999999999 L1.0,10.5 Z M5.6,12.399999999999999 V17.0" fill="none" stroke="#141418" stroke-width="1.25" stroke-linejoin="round"/><path d="M10.0,10.5 V15.1 L14.6,17.0 L19.2,15.1 V10.5 L14.6,12.399999999999999 Z" fill="#c6d0e4"/><path d="M14.6,8.6 L19.2,10.5 L14.6,12.399999999999999 L10.0,10.5 Z" fill="#f4f5fb"/><path d="M10.0,10.5 V15.1 L14.6,17.0 L19.2,15.1 V10.5 L14.6,12.399999999999999 Z M14.6,8.6 L19.2,10.5 L14.6,12.399999999999999 L10.0,10.5 Z M14.6,12.399999999999999 V17.0" fill="none" stroke="#141418" stroke-width="1.25" stroke-linejoin="round"/></svg>
<span class="t " style="left:375.7px;top:191.29px;font-size:13px;line-height:20px;height:20px;color:#1f1f24;">Stan magazynowy</span>
<svg class="a" style="left:546px;top:193px" width="12" height="16" viewBox="0 0 12 16"><path d="M1.6,0 H7.4 L12,4.6 V14.4 C12,15.3 11.3,16 10.4,16 H1.6 C0.7,16 0,15.3 0,14.4 V1.6 C0,0.7 0.7,0 1.6,0 Z" fill="#a5a7ec"/><path d="M7.4,0 L12,4.6 H7.4 Z" fill="#2d2bcc"/></svg>
<span class="t " style="left:569px;top:190.79px;font-size:13px;line-height:20px;height:20px;color:#2d2bcc;">Dokumenty</span>
<svg class="a" style="left:690px;top:188px" width="30" height="24" viewBox="0 0 30 24"><path d="M6,6.1 L13.1,7.3 L10.8,11.6 L4.2,9.8 Z M21.2,6.1 L14.1,7.3 L16.4,11.6 L23,9.8 Z" fill="#a5a7ec"/><path d="M6,10.9 L10.9,11.9 L13.6,7.3 L16.3,11.9 L21.2,10.9 L21.2,17.8 L13.6,19.8 L6,17.8 Z" fill="#2d2bcc"/></svg>
<span class="t " style="left:721px;top:190.79px;font-size:13px;line-height:20px;height:20px;color:#2d2bcc;">Produkty</span>
<svg class="a" style="left:830px;top:192px" width="21" height="17" viewBox="0 0 21 17"><g fill="none" stroke="#2d2bcc" stroke-width="1.5"><path d="M1.5,16.6 V5.8 L10.5,1.8 L19.5,5.8 V16.6"/><rect x="4.8" y="7.9" width="11.4" height="8.4"/><path d="M4.8,10.6 H16.2 M4.8,13.4 H16.2"/></g></svg>
<span class="t " style="left:857.4px;top:190.79px;font-size:13px;line-height:20px;height:20px;color:#2d2bcc;">Magazyny</span>
<svg class="a" style="left:979px;top:193px" width="13" height="16" viewBox="0 0 13 16"><path d="M6.5,0 C10.1,0 13,2.8 13,6.3 C13,9.8 9,14 6.5,16 C4,14 0,9.8 0,6.3 C0,2.8 2.9,0 6.5,0 Z" fill="#a5a7ec"/><circle cx="6.5" cy="6.3" r="1.7" fill="#1d1b6e"/></svg>
<span class="t " style="left:1003px;top:190.79px;font-size:13px;line-height:20px;height:20px;color:#2d2bcc;">Lokalizacje magazynu</span>
<div class="a" style="left:339px;top:233px;width:1542px;height:48px;border-left:1px solid #dfe2e8;border-right:1px solid #dfe2e8;border-bottom:2px solid #dcdfe6"></div>
<span class="t " style="left:1496.5px;top:246.89px;font-size:13px;line-height:20px;height:20px;color:#222;">Widok</span>
<svg class="a" style="left:1550px;top:250px" width="15" height="12" viewBox="0 0 15 12"><g fill="none" stroke="#444" stroke-width="0.95"><path d="M0.8,6 C2.6,2.6 4.8,1 7.5,1 C10.2,1 12.4,2.6 14.2,6 C12.4,9.4 10.2,11 7.5,11 C4.8,11 2.6,9.4 0.8,6 Z"/><circle cx="7.5" cy="6" r="2.6"/></g></svg>
<span class="t " style="left:1570.7px;top:246.89px;font-size:13px;line-height:20px;height:20px;color:#222;">Default</span>
<div class="a" style="left:1541px;top:271px;width:250px;height:1px;background:#e3e5ea"></div>
<svg class="a" style="left:1774px;top:252px" width="8" height="7" viewBox="0 0 8 7"><path d="M0,0 H8 L4,7 Z" fill="#222"/></svg>
<div class="a" style="left:1797px;top:241px;width:58px;height:31px;background:#e6eafd;border-radius:5px"></div>
<svg class="a" style="left:1807px;top:249px" width="12" height="14" viewBox="0 0 12 14"><path d="M3.4,6.4 V4 C3.4,2.4 4.5,1.2 6,1.2 C7.5,1.2 8.6,2.4 8.6,4 V6.4" fill="none" stroke="#2d2bcc" stroke-width="1.4"/><rect x="0.8" y="6" width="10.4" height="7.6" rx="1.4" fill="#2d2bcc"/><rect x="5.1" y="8.6" width="1.8" height="2.4" fill="#fff"/></svg>
<svg class="a" style="left:1837px;top:252px" width="8" height="7" viewBox="0 0 8 7"><path d="M0,0 H8 L4,7 Z" fill="#2d2bcc"/></svg>
<div class="a" style="left:339px;top:281px;width:1542px;height:381px;border:1px solid #dfe2e8;border-top-color:#eceef3;border-radius:5px;background:#f7f8fb;overflow:hidden"></div>
<div class="a" style="left:340px;top:365px;width:1540px;height:1px;background:#dfe2e8"></div>
<div class="a" style="left:1863px;top:282px;width:1px;height:83px;background:#e3e5ea"></div>
<div class="a" style="left:340px;top:282px;width:1540px;height:84px;overflow:hidden">
<div class="a" style="left:-10px;top:46px;width:46px;height:31px;border:1px solid #e3e9f9;border-radius:5px;background:#f6f7fc;overflow:hidden">
</div>
<div class="a" style="left:40px;top:46px;width:32px;height:31px;border-radius:5px;background:#e6ebfc"></div>
<svg class="a" style="left:49.0px;top:56px" width="13" height="14" viewBox="0 0 13 14"><path d="M0,0 H13 L7.7,6 V11.2 L5.1,14 L5.4,6 Z" fill="#4d55da"/></svg>
<span class="t" style="left:85px;top:13.84px;font-size:12px;line-height:20px;color:#54575d">Produkt</span>
<svg class="a" style="left:138.89999999999998px;top:16px" width="4" height="14" viewBox="0 0 4 14"><g fill="#5d5f65"><circle cx="2" cy="2" r="1.6"/><circle cx="2" cy="7" r="1.6"/><circle cx="2" cy="12" r="1.6"/></g></svg>
<div class="a" style="left:85px;top:46px;width:102px;height:31px;border:1px solid #e3e9f9;border-radius:5px;background:#f6f7fc;overflow:hidden">
</div>
<div class="a" style="left:190px;top:46px;width:32px;height:31px;border-radius:5px;background:#e6ebfc"></div>
<svg class="a" style="left:199.0px;top:56px" width="13" height="14" viewBox="0 0 13 14"><path d="M0,0 H13 L7.7,6 V11.2 L5.1,14 L5.4,6 Z" fill="#4d55da"/></svg>
<span class="t" style="left:235px;top:13.84px;font-size:12px;line-height:20px;color:#54575d">Ilość</span>
<svg class="a" style="left:272.79999999999995px;top:16px" width="4" height="14" viewBox="0 0 4 14"><g fill="#5d5f65"><circle cx="2" cy="2" r="1.6"/><circle cx="2" cy="7" r="1.6"/><circle cx="2" cy="12" r="1.6"/></g></svg>
<div class="a" style="left:235px;top:46px;width:110px;height:31px;border:1px solid #e3e9f9;border-radius:5px;background:#f6f7fc;overflow:hidden">
<div class="a" style="left:81px;top:0;width:28px;height:29px;background:#e8ecfb"></div>
<svg class="a" style="left:90.6px;top:3.4px" width="9" height="22" viewBox="0 0 9 22"><g fill="#4d55da"><path d="M4.5,1.2 L8.5,6.6 H0.5 Z"/><path d="M0.5,16.2 H8.5 L4.5,21.6 Z"/></g></svg>
</div>
<div class="a" style="left:348px;top:46px;width:32px;height:31px;border-radius:5px;background:#e6ebfc"></div>
<svg class="a" style="left:357.0px;top:56px" width="13" height="14" viewBox="0 0 13 14"><path d="M0,0 H13 L7.7,6 V11.2 L5.1,14 L5.4,6 Z" fill="#4d55da"/></svg>
<span class="t" style="left:393px;top:13.84px;font-size:12px;line-height:20px;color:#54575d">Cena netto</span>
<svg class="a" style="left:463.9px;top:16px" width="4" height="14" viewBox="0 0 4 14"><g fill="#5d5f65"><circle cx="2" cy="2" r="1.6"/><circle cx="2" cy="7" r="1.6"/><circle cx="2" cy="12" r="1.6"/></g></svg>
<div class="a" style="left:393px;top:46px;width:110px;height:31px;border:1px solid #e3e9f9;border-radius:5px;background:#f6f7fc;overflow:hidden">
<div class="a" style="left:81px;top:0;width:28px;height:29px;background:#e8ecfb"></div>
<svg class="a" style="left:90.6px;top:3.4px" width="9" height="22" viewBox="0 0 9 22"><g fill="#4d55da"><path d="M4.5,1.2 L8.5,6.6 H0.5 Z"/><path d="M0.5,16.2 H8.5 L4.5,21.6 Z"/></g></svg>
</div>
<div class="a" style="left:506px;top:46px;width:32px;height:31px;border-radius:5px;background:#e6ebfc"></div>
<svg class="a" style="left:515.0px;top:56px" width="13" height="14" viewBox="0 0 13 14"><path d="M0,0 H13 L7.7,6 V11.2 L5.1,14 L5.4,6 Z" fill="#4d55da"/></svg>
<span class="t" style="left:551px;top:13.84px;font-size:12px;line-height:20px;color:#54575d">Stawka VAT</span>
<svg class="a" style="left:627.0px;top:16px" width="4" height="14" viewBox="0 0 4 14"><g fill="#5d5f65"><circle cx="2" cy="2" r="1.6"/><circle cx="2" cy="7" r="1.6"/><circle cx="2" cy="12" r="1.6"/></g></svg>
<div class="a" style="left:551px;top:46px;width:108px;height:31px;border:1px solid #e3e9f9;border-radius:5px;background:#f6f7fc;overflow:hidden">
<div class="a" style="left:79px;top:0;width:28px;height:29px;background:#e8ecfb"></div>
<svg class="a" style="left:88.6px;top:3.4px" width="9" height="22" viewBox="0 0 9 22"><g fill="#4d55da"><path d="M4.5,1.2 L8.5,6.6 H0.5 Z"/><path d="M0.5,16.2 H8.5 L4.5,21.6 Z"/></g></svg>
</div>
<div class="a" style="left:662px;top:46px;width:32px;height:31px;border-radius:5px;background:#e6ebfc"></div>
<svg class="a" style="left:671.0px;top:56px" width="13" height="14" viewBox="0 0 13 14"><path d="M0,0 H13 L7.7,6 V11.2 L5.1,14 L5.4,6 Z" fill="#4d55da"/></svg>
<span class="t" style="left:707px;top:13.84px;font-size:12px;line-height:20px;color:#54575d">Cena brutto</span>
<svg class="a" style="left:782.6000000000001px;top:16px" width="4" height="14" viewBox="0 0 4 14"><g fill="#5d5f65"><circle cx="2" cy="2" r="1.6"/><circle cx="2" cy="7" r="1.6"/><circle cx="2" cy="12" r="1.6"/></g></svg>
<div class="a" style="left:707px;top:46px;width:102px;height:31px;border:1px solid #e3e9f9;border-radius:5px;background:#f6f7fc;overflow:hidden">
<div class="a" style="left:73px;top:0;width:28px;height:29px;background:#e8ecfb"></div>
<svg class="a" style="left:82.6px;top:3.4px" width="9" height="22" viewBox="0 0 9 22"><g fill="#4d55da"><path d="M4.5,1.2 L8.5,6.6 H0.5 Z"/><path d="M0.5,16.2 H8.5 L4.5,21.6 Z"/></g></svg>
</div>
<div class="a" style="left:812px;top:46px;width:32px;height:31px;border-radius:5px;background:#e6ebfc"></div>
<svg class="a" style="left:821.0px;top:56px" width="13" height="14" viewBox="0 0 13 14"><path d="M0,0 H13 L7.7,6 V11.2 L5.1,14 L5.4,6 Z" fill="#4d55da"/></svg>
<span class="t" style="left:857px;top:13.84px;font-size:12px;line-height:20px;color:#54575d">Wartość netto</span>
<svg class="a" style="left:946.2px;top:16px" width="4" height="14" viewBox="0 0 4 14"><g fill="#5d5f65"><circle cx="2" cy="2" r="1.6"/><circle cx="2" cy="7" r="1.6"/><circle cx="2" cy="12" r="1.6"/></g></svg>
<div class="a" style="left:857px;top:46px;width:104px;height:31px;border:1px solid #e3e9f9;border-radius:5px;background:#f6f7fc;overflow:hidden">
<div class="a" style="left:76px;top:0;width:27px;height:29px;background:#e8ecfb"></div>
<svg class="a" style="left:85.1px;top:3.4px" width="9" height="22" viewBox="0 0 9 22"><g fill="#4d55da"><path d="M4.5,1.2 L8.5,6.6 H0.5 Z"/><path d="M0.5,16.2 H8.5 L4.5,21.6 Z"/></g></svg>
</div>
<div class="a" style="left:965px;top:46px;width:32px;height:31px;border-radius:5px;background:#e6ebfc"></div>
<svg class="a" style="left:974.0px;top:56px" width="13" height="14" viewBox="0 0 13 14"><path d="M0,0 H13 L7.7,6 V11.2 L5.1,14 L5.4,6 Z" fill="#4d55da"/></svg>
<span class="t" style="left:1010px;top:13.84px;font-size:12px;line-height:20px;color:#54575d">Wartość brutto</span>
<svg class="a" style="left:1103.6000000000001px;top:16px" width="4" height="14" viewBox="0 0 4 14"><g fill="#5d5f65"><circle cx="2" cy="2" r="1.6"/><circle cx="2" cy="7" r="1.6"/><circle cx="2" cy="12" r="1.6"/></g></svg>
<div class="a" style="left:1010px;top:46px;width:107px;height:31px;border:1px solid #e3e9f9;border-radius:5px;background:#f6f7fc;overflow:hidden">
<div class="a" style="left:78px;top:0;width:28px;height:29px;background:#e8ecfb"></div>
<svg class="a" style="left:87.6px;top:3.4px" width="9" height="22" viewBox="0 0 9 22"><g fill="#4d55da"><path d="M4.5,1.2 L8.5,6.6 H0.5 Z"/><path d="M0.5,16.2 H8.5 L4.5,21.6 Z"/></g></svg>
</div>
<div class="a" style="left:1120px;top:46px;width:32px;height:31px;border-radius:5px;background:#e6ebfc"></div>
<svg class="a" style="left:1129.0px;top:56px" width="13" height="14" viewBox="0 0 13 14"><path d="M0,0 H13 L7.7,6 V11.2 L5.1,14 L5.4,6 Z" fill="#4d55da"/></svg>
<span class="t" style="left:1165px;top:13.84px;font-size:12px;line-height:20px;color:#54575d">Data utworzenia</span>
<svg class="a" style="left:1265.9px;top:16px" width="4" height="14" viewBox="0 0 4 14"><g fill="#5d5f65"><circle cx="2" cy="2" r="1.6"/><circle cx="2" cy="7" r="1.6"/><circle cx="2" cy="12" r="1.6"/></g></svg>
<div class="a" style="left:1165px;top:46px;width:114px;height:31px;border:1px solid #e3e9f9;border-radius:5px;background:#f6f7fc;overflow:hidden">
<div class="a" style="left:85px;top:0;width:28px;height:29px;background:#e8ecfb"></div>
<svg class="a" style="left:92px;top:7px" width="14" height="15" viewBox="0 0 14 15"><g fill="none" stroke="#4d55da" stroke-width="1.3"><rect x="0.7" y="2.2" width="12.6" height="12.1" rx="0.6"/><path d="M0.7,5.4 H13.3"/></g><g fill="#4d55da"><rect x="3.2" y="0.4" width="1.4" height="3"/><rect x="9.4" y="0.4" width="1.4" height="3"/><rect x="8.6" y="9.6" width="3" height="3"/></g></svg>
</div>
<div class="a" style="left:1282px;top:46px;width:32px;height:31px;border-radius:5px;background:#e6ebfc"></div>
<svg class="a" style="left:1291.0px;top:56px" width="13" height="14" viewBox="0 0 13 14"><path d="M0,0 H13 L7.7,6 V11.2 L5.1,14 L5.4,6 Z" fill="#4d55da"/></svg>
<span class="t" style="left:1327px;top:13.84px;font-size:12px;line-height:20px;color:#54575d">Magazyn</span>
<svg class="a" style="left:1389.9px;top:16px" width="4" height="14" viewBox="0 0 4 14"><g fill="#5d5f65"><circle cx="2" cy="2" r="1.6"/><circle cx="2" cy="7" r="1.6"/><circle cx="2" cy="12" r="1.6"/></g></svg>
<div class="a" style="left:1327px;top:46px;width:102px;height:31px;border:1px solid #e3e9f9;border-radius:5px;background:#f6f7fc;overflow:hidden">
</div>
<div class="a" style="left:1432px;top:46px;width:32px;height:31px;border-radius:5px;background:#e6ebfc"></div>
<svg class="a" style="left:1441.0px;top:56px" width="13" height="14" viewBox="0 0 13 14"><path d="M0,0 H13 L7.7,6 V11.2 L5.1,14 L5.4,6 Z" fill="#4d55da"/></svg>
</div>
<svg class="a" style="left:1820px;top:290px" width="16" height="21" viewBox="0 0 16 21"><path d="M1.6,0 H10.6 L16,5.4 V19.4 C16,20.3 15.3,21 14.4,21 H1.6 C0.7,21 0,20.3 0,19.4 V1.6 C0,0.7 0.7,0 1.6,0 Z" fill="#3d9b5f"/><path d="M10.6,0 L16,5.4 H10.6 Z" fill="#cfe8d6"/><path d="M4.2,8.6 H6.6 L8,11.2 L9.4,8.6 H11.8 L9.3,12.6 L11.9,16.8 H9.5 L8,14.1 L6.5,16.8 H4.1 L6.7,12.6 Z" fill="#fff"/></svg>
<svg class="a" style="left:1843px;top:290px" width="16" height="21" viewBox="0 0 16 21"><path d="M1.6,0 H10.6 L16,5.4 V19.4 C16,20.3 15.3,21 14.4,21 H1.6 C0.7,21 0,20.3 0,19.4 V1.6 C0,0.7 0.7,0 1.6,0 Z" fill="#e05a68"/><path d="M10.6,0 L16,5.4 H10.6 Z" fill="#f6d2d6"/><text x="8" y="14.6" font-family="Liberation Sans" font-weight="bold" font-size="6.4" fill="#fff" text-anchor="middle">PDF</text></svg>
<div class="a" style="left:340px;top:366px;width:1530px;height:240px;background:#fdfdfe"></div>
<div class="a" style="left:1870px;top:366px;width:10px;height:240px;background:#f1f2f8"></div>
<span class="t " style="left:425px;top:376.49px;font-size:13px;line-height:20px;height:20px;color:#2d2bcc;">sluchawki test</span>
<span class="t " style="left:575px;top:376.49px;font-size:13px;line-height:20px;height:20px;color:#1f1f24;">27</span>
<span class="t " style="left:733px;top:376.49px;font-size:13px;line-height:20px;height:20px;color:#1f1f24;">123,00</span>
<span class="t " style="left:891px;top:376.49px;font-size:13px;line-height:20px;height:20px;color:#1f1f24;">23</span>
<span class="t " style="left:1047px;top:376.49px;font-size:13px;line-height:20px;height:20px;color:#1f1f24;">151,29</span>
<span class="t " style="left:1197px;top:376.49px;font-size:13px;line-height:20px;height:20px;color:#1f1f24;">3 321,00</span>
<span class="t " style="left:1350px;top:376.49px;font-size:13px;line-height:20px;height:20px;color:#1f1f24;">4 084,83</span>
<span class="t " style="left:1505px;top:376.49px;font-size:13px;line-height:20px;height:20px;color:#1f1f24;">15.09.2023 07:07:22</span>
<span class="t " style="left:1667px;top:376.49px;font-size:13px;line-height:20px;height:20px;color:#1f1f24;">glowny</span>
<div class="a" style="left:340px;top:405px;width:1530px;height:1px;background:#e6e8ed"></div>
<span class="t " style="left:425px;top:416.49px;font-size:13px;line-height:20px;height:20px;color:#2d2bcc;">sluchawki test</span>
<span class="t " style="left:575px;top:416.49px;font-size:13px;line-height:20px;height:20px;color:#1f1f24;">2</span>
<span class="t " style="left:733px;top:416.49px;font-size:13px;line-height:20px;height:20px;color:#1f1f24;">123,00</span>
<span class="t " style="left:891px;top:416.49px;font-size:13px;line-height:20px;height:20px;color:#1f1f24;">23</span>
<span class="t " style="left:1047px;top:416.49px;font-size:13px;line-height:20px;height:20px;color:#1f1f24;">151,29</span>
<span class="t " style="left:1197px;top:416.49px;font-size:13px;line-height:20px;height:20px;color:#1f1f24;">246,00</span>
<span class="t " style="left:1350px;top:416.49px;font-size:13px;line-height:20px;height:20px;color:#1f1f24;">302,58</span>
<span class="t " style="left:1505px;top:416.49px;font-size:13px;line-height:20px;height:20px;color:#1f1f24;">09.11.2023 08:12:51</span>
<span class="t " style="left:1667px;top:416.49px;font-size:13px;line-height:20px;height:20px;color:#1f1f24;">magazyn test1</span>
<div class="a" style="left:340px;top:445px;width:1530px;height:1px;background:#e6e8ed"></div>
<span class="t " style="left:425px;top:456.49px;font-size:13px;line-height:20px;height:20px;color:#2d2bcc;">telewizor testowy</span>
<span class="t " style="left:575px;top:456.49px;font-size:13px;line-height:20px;height:20px;color:#1f1f24;">1</span>
<span class="t " style="left:733px;top:456.49px;font-size:13px;line-height:20px;height:20px;color:#1f1f24;">1 000,00</span>
<span class="t " style="left:891px;top:456.49px;font-size:13px;line-height:20px;height:20px;color:#1f1f24;">23</span>
<span class="t " style="left:1047px;top:456.49px;font-size:13px;line-height:20px;height:20px;color:#1f1f24;">1 230,00</span>
<span class="t " style="left:1197px;top:456.49px;font-size:13px;line-height:20px;height:20px;color:#1f1f24;">1 000,00</span>
<span class="t " style="left:1350px;top:456.49px;font-size:13px;line-height:20px;height:20px;color:#1f1f24;">1 230,00</span>
<span class="t " style="left:1505px;top:456.49px;font-size:13px;line-height:20px;height:20px;color:#1f1f24;">17.01.2024 11:28:15</span>
<span class="t " style="left:1667px;top:456.49px;font-size:13px;line-height:20px;height:20px;color:#1f1f24;">glowny</span>
<div class="a" style="left:340px;top:485px;width:1530px;height:1px;background:#e6e8ed"></div>
<span class="t " style="left:425px;top:496.49px;font-size:13px;line-height:20px;height:20px;color:#2d2bcc;">telewizor testowy</span>
<span class="t " style="left:575px;top:496.49px;font-size:13px;line-height:20px;height:20px;color:#1f1f24;">11</span>
<span class="t " style="left:733px;top:496.49px;font-size:13px;line-height:20px;height:20px;color:#1f1f24;">1 000,00</span>
<span class="t " style="left:891px;top:496.49px;font-size:13px;line-height:20px;height:20px;color:#1f1f24;">23</span>
<span class="t " style="left:1047px;top:496.49px;font-size:13px;line-height:20px;height:20px;color:#1f1f24;">1 230,00</span>
<span class="t " style="left:1197px;top:496.49px;font-size:13px;line-height:20px;height:20px;color:#1f1f24;">11 000,00</span>
<span class="t " style="left:1350px;top:496.49px;font-size:13px;line-height:20px;height:20px;color:#1f1f24;">13 530,00</span>
<span class="t " style="left:1505px;top:496.49px;font-size:13px;line-height:20px;height:20px;color:#1f1f24;">17.01.2024 11:28:15</span>
<span class="t " style="left:1667px;top:496.49px;font-size:13px;line-height:20px;height:20px;color:#1f1f24;">testowy magazyn</span>
<div class="a" style="left:340px;top:525px;width:1530px;height:1px;background:#e6e8ed"></div>
<span class="t " style="left:425px;top:536.49px;font-size:13px;line-height:20px;height:20px;color:#2d2bcc;">słuchawki</span>
<span class="t " style="left:575px;top:536.49px;font-size:13px;line-height:20px;height:20px;color:#1f1f24;">1</span>
<span class="t " style="left:733px;top:536.49px;font-size:13px;line-height:20px;height:20px;color:#1f1f24;">200,00</span>
<span class="t " style="left:891px;top:536.49px;font-size:13px;line-height:20px;height:20px;color:#1f1f24;">23</span>
<span class="t " style="left:1047px;top:536.49px;font-size:13px;line-height:20px;height:20px;color:#1f1f24;">246,00</span>
<span class="t " style="left:1197px;top:536.49px;font-size:13px;line-height:20px;height:20px;color:#1f1f24;">200,00</span>
<span class="t " style="left:1350px;top:536.49px;font-size:13px;line-height:20px;height:20px;color:#1f1f24;">246,00</span>
<span class="t " style="left:1505px;top:536.49px;font-size:13px;line-height:20px;height:20px;color:#1f1f24;">09.11.2023 08:12:51</span>
<span class="t " style="left:1667px;top:536.49px;font-size:13px;line-height:20px;height:20px;color:#1f1f24;">magazyn test1</span>
<div class="a" style="left:340px;top:565px;width:1530px;height:1px;background:#e6e8ed"></div>
<span class="t " style="left:425px;top:576.49px;font-size:13px;line-height:20px;height:20px;color:#2d2bcc;">Telefon komórkowy</span>
<span class="t " style="left:575px;top:576.49px;font-size:13px;line-height:20px;height:20px;color:#1f1f24;">12</span>
<span class="t " style="left:733px;top:576.49px;font-size:13px;line-height:20px;height:20px;color:#1f1f24;">1 000,00</span>
<span class="t " style="left:891px;top:576.49px;font-size:13px;line-height:20px;height:20px;color:#1f1f24;">23</span>
<span class="t " style="left:1047px;top:576.49px;font-size:13px;line-height:20px;height:20px;color:#1f1f24;">1 230,00</span>
<span class="t " style="left:1197px;top:576.49px;font-size:13px;line-height:20px;height:20px;color:#1f1f24;">12 000,00</span>
<span class="t " style="left:1350px;top:576.49px;font-size:13px;line-height:20px;height:20px;color:#1f1f24;">14 760,00</span>
<span class="t " style="left:1505px;top:576.49px;font-size:13px;line-height:20px;height:20px;color:#1f1f24;">16.10.2023 06:46:02</span>
<span class="t " style="left:1667px;top:576.49px;font-size:13px;line-height:20px;height:20px;color:#1f1f24;">glowny</span>
<div class="a" style="left:340px;top:605px;width:1530px;height:1px;background:#e6e8ed"></div>
<div class="a" style="left:340px;top:606px;width:1540px;height:10px;background:#f3f4f9"></div>
<div class="a" style="left:465px;top:606px;width:1405px;height:10px;background:#b9c0e7"></div>
<div class="a" style="left:340px;top:616px;width:1540px;height:1px;background:#e3e5ea"></div>
<svg class="a" style="left:357px;top:635px" width="9" height="9" viewBox="0 0 9 9"><rect x="0" y="0" width="1.6" height="9" fill="#6b6d72"/><path d="M8.4,0 V9 L2.2,4.5 Z" fill="#6b6d72"/></svg>
<svg class="a" style="left:390px;top:635px" width="7" height="9" viewBox="0 0 7 9"><path d="M6.4,0 V9 L0.2,4.5 Z" fill="#6b6d72"/></svg>
<div class="a" style="left:408px;top:623px;width:31px;height:32px;background:#cdd0ef"></div>
<span class="t " style="left:420px;top:629.49px;font-size:13px;line-height:20px;height:20px;color:#2d2bcc;">1</span>
<svg class="a" style="left:451px;top:635px" width="7" height="9" viewBox="0 0 7 9"><path d="M0.4,0 V9 L6.6,4.5 Z" fill="#6b6d72"/></svg>
<svg class="a" style="left:480px;top:635px" width="9" height="9" viewBox="0 0 9 9"><path d="M0.2,0 V9 L6.4,4.5 Z" fill="#6b6d72"/><rect x="7" y="0" width="1.6" height="9" fill="#6b6d72"/></svg>
<span class="t " style="left:514px;top:629.49px;font-size:13px;line-height:20px;height:20px;color:#222;">Strona</span>
<div class="a" style="left:559px;top:623px;width:65px;height:32px;border:1px solid #e1e7f8;border-radius:5px;background:#f6f7fc"></div>
<span class="t " style="left:570.7px;top:629.49px;font-size:13px;line-height:20px;height:20px;color:#222;">1</span>
<span class="t " style="left:631px;top:629.49px;font-size:13px;line-height:20px;height:20px;color:#222;">z 1</span>
<div class="a" style="left:661px;top:623px;width:65px;height:32px;border:1px solid #e1e7f8;border-radius:5px;background:#f6f7fc;overflow:hidden"><div class="a" style="left:36px;top:0;width:28px;height:30px;background:#e6eafd"></div></div>
<span class="t " style="left:672px;top:629.49px;font-size:13px;line-height:20px;height:20px;color:#222;">20</span>
<svg class="a" style="left:707.6px;top:636px" width="9" height="7" viewBox="0 0 9 7"><path d="M0,0 H9 L4.5,7 Z" fill="#2d2bcc"/></svg>
<span class="t " style="left:733.3px;top:629.49px;font-size:13px;line-height:20px;height:20px;color:#222;">na stronę</span>
<span class="t " style="left:1638px;top:629.49px;font-size:13px;line-height:20px;height:20px;color:#222;">Wyświetlanie elementów 1 - 6 z 6</span>
<svg class="a" style="left:1852px;top:630px" width="16" height="17" viewBox="0 0 16 17"><path d="M12.6,5.2 A6,6 0 1 0 13.9,9.6" fill="none" stroke="#222" stroke-width="1.8"/><path d="M9.8,1.6 L14.6,1.2 L14,6.2 Z" fill="#222"/></svg>
</body></html>
